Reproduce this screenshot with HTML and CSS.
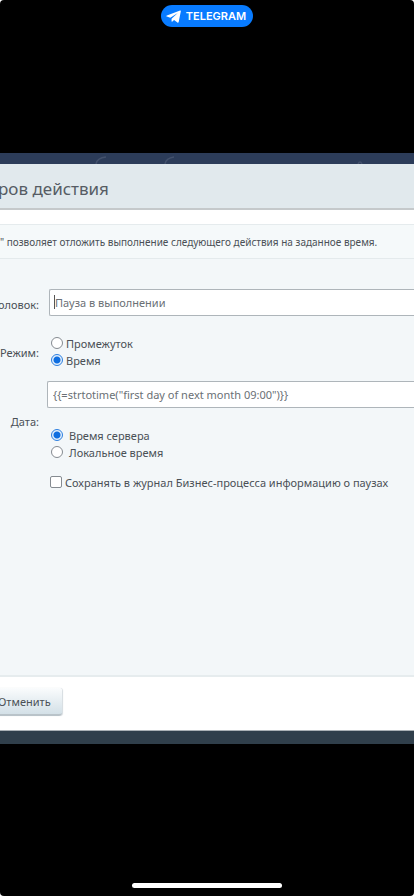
FILE: index.html
```
<!DOCTYPE html>
<html lang="ru">
<head>
    <meta charset="UTF-8">
    <meta name="viewport" content="width=device-width, initial-scale=1.0">
    <title>Параметры действия</title>
    <link rel="stylesheet" href="styles.css">
</head>
<body>
    <div class="screen">
        <header class="status-bar">
            <a class="back-app" href="#">
                <svg class="plane" viewBox="0 0 16 14" aria-hidden="true">
                    <path fill="#fff" d="M15.1.6c.5-.2.9.1.8.7l-2.3 11.500c-.2.800-.8 1-1.400.600L8.600 10.700l-1.800 1.800c-.4.400-.9.300-.9-.3V9.300L12.600 3.200 4.500 8.300.900 7.100c-.8-.3-.8-.9 0-1.300z"/>
                </svg>
                TELEGRAM
            </a>
        </header>

        <main class="viewer">
            <div class="backdrop-top">
                <svg viewBox="0 0 414 11" aria-hidden="true">
                    <path fill="none" stroke="#43516c" stroke-width="1.5" d="M96 11q1-6 10-7M165 11q1-6 9-7M358 11q2-4 4 0"/>
                </svg>
            </div>

            <form class="dialog">
                <h1 class="dialog-title">ров действия</h1>
                <p class="dialog-note">" позволяет отложить выполнение следующего действия на заданное время.</p>

                <div class="dialog-body">
                    <div class="row row-name">
                        <label class="row-label" for="title">оловок:</label>
                        <input class="text-input" type="text" id="title" value="Пауза в выполнении">
                        <span class="caret"></span>
                    </div>

                    <div class="row row-mode">
                        <span class="row-label">Режим:</span>
                        <div class="options">
                            <label class="option"><input type="radio" name="mode">Промежуток</label>
                            <label class="option"><input type="radio" name="mode" checked>Время</label>
                        </div>
                    </div>

                    <div class="row row-date">
                        <label class="row-label" for="date">Дата:</label>
                        <div class="date-fields">
                            <input class="text-input" type="text" id="date" value='{{=strtotime("first day of next month 09:00")}}'>
                            <div class="options options-zone">
                                <label class="option"><input type="radio" name="zone" checked>Время сервера</label>
                                <label class="option"><input type="radio" name="zone">Локальное время</label>
                            </div>
                        </div>
                    </div>

                    <label class="option option-log"><input type="checkbox">Сохранять в журнал Бизнес-процесса информацию о паузах</label>
                </div>

                <div class="dialog-footer">
                    <button class="cancel" type="button">Отменить</button>
                </div>
            </form>

            <div class="backdrop-bottom"></div>
        </main>

        <footer class="home">
            <span class="home-bar"></span>
        </footer>
    </div>
</body>
</html>
```
FILE: styles.css
```
* {
    box-sizing: border-box;
}

body {
    margin: 0;
    background: #fff;
    color: #4a5056;
    font-family: "Noto Sans", "Open Sans", sans-serif;
    font-size: 11px;
    line-height: 17px;
}

.screen {
    display: flex;
    flex-direction: column;
    min-height: 100vh;
    overflow: hidden;
    background: #000;
    border-radius: 4px;
}

.status-bar {
    display: flex;
    justify-content: center;
    align-items: flex-start;
    height: 153px;
    padding-top: 5px;
}

.back-app {
    display: flex;
    align-items: center;
    gap: 5px;
    height: 22px;
    padding: 0 7px 0 5px;
    border-radius: 11px;
    background: #087bff;
    color: #fff;
    font-family: Inter, sans-serif;
    font-size: 11px;
    font-weight: 600;
    text-decoration: none;
}

.plane {
    width: 15px;
    height: 13px;
}

.backdrop-top {
    height: 11px;
    background: #2c3c59;
}

.backdrop-top svg {
    display: block;
    width: 100%;
    height: 11px;
}

.backdrop-bottom {
    height: 13px;
    background: #303f4b;
}

.dialog {
    background: #fff;
    border-bottom: 1px solid #aab1b5;
}

.dialog-title {
    height: 46px;
    margin: 0 0 14px;
    padding-top: 13px;
    background: #e1e9ed;
    border-bottom: 2px solid #c5c9cb;
    color: #565c64;
    font-size: 17px;
    font-weight: 400;
    line-height: 24px;
    text-indent: -2px;
}

.dialog-note {
    margin: 0;
    padding: 9px 0 7px;
    background: #f5f9fa;
    border-top: 1px solid #e5ebed;
    border-bottom: 1px solid #e4eaec;
    font-size: 10px;
    white-space: nowrap;
}

.dialog-body {
    height: 418px;
    padding-top: 30px;
    background: #f3f7f9;
    border-bottom: 2px solid #e6ecee;
}

.row {
    display: flex;
    position: relative;
}

.row-label {
    display: flex;
    flex: none;
    justify-content: flex-end;
    width: 39px;
}

.text-input {
    flex: 1;
    width: 100%;
    height: 27px;
    padding: 0 5px;
    border: 1px solid #aeb5ba;
    border-right: 0;
    border-radius: 2px 0 0 2px;
    background: #fff;
    color: #6a7075;
    font: inherit;
}

.row-name {
    gap: 10px;
    align-items: center;
}

.row-name .row-label {
    padding-top: 4px;
}

.caret {
    position: absolute;
    top: 6px;
    left: 54px;
    width: 1px;
    height: 14px;
    background: #555;
}

.row-mode {
    gap: 12px;
    align-items: center;
    margin-top: 19px;
}

.option {
    display: flex;
    align-items: center;
    gap: 3px;
    white-space: nowrap;
}

.option input {
    flex: none;
    appearance: none;
    width: 12px;
    height: 12px;
    margin: 0 0 2px;
    border: 1px solid #858b91;
    border-radius: 50%;
    background: #fff;
}

.option input:checked {
    border-color: #2c7fe0;
    background: radial-gradient(circle, #0f6ee0 0 3px, #e4f0fc 4px);
}

.option input[type="checkbox"] {
    border-radius: 2px;
}

.row-date {
    gap: 8px;
    align-items: center;
    margin-top: 12px;
}

.date-fields {
    flex: 1;
}

.date-fields .text-input {
    display: block;
}

.options-zone {
    margin-top: 19px;
    padding-left: 4px;
}

.options-zone .option {
    gap: 6px;
}

.option-log {
    margin-top: 13px;
    padding-left: 50px;
}

.dialog-footer {
    padding: 11px 0 14px;
}

.cancel {
    height: 28px;
    margin-left: -12px;
    padding: 0 11px 0 10px;
    border: 0;
    border-bottom: 2px solid #b9c3c9;
    border-radius: 3px;
    background: linear-gradient(#fafcfd, #d3e0e7);
    box-shadow: 1px 0 1px #d5dce0;
    color: #4a5056;
    font: inherit;
}

.home {
    display: flex;
    flex: 1;
    justify-content: center;
    align-items: flex-end;
    padding-bottom: 8px;
}

.home-bar {
    width: 36%;
    height: 5px;
    border-radius: 3px;
    background: #fff;
}
```
